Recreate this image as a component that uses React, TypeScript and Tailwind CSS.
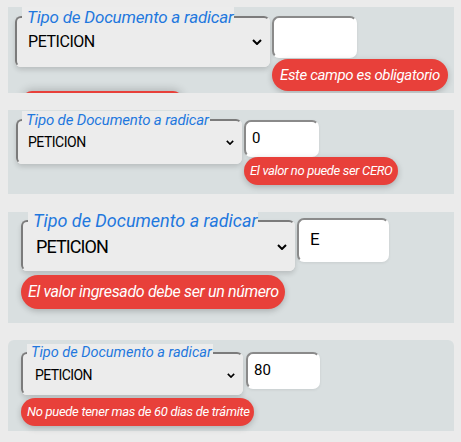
import type { ReactNode } from 'react';

type SelectProps = {
  box: string;
  legend: string;
  body: string;
  value: string;
  chevron: string;
};

// select-like box: fieldset whose legend breaks the top border
const DocSelect = ({ box, legend, body, value, chevron }: SelectProps) => (
  <fieldset
    className={`shrink-0 rounded-md border-2 border-t-[#7b7b7b] border-l-[#7b7b7b] border-r-[#ececec] border-b-[#ececec] bg-[#ececec] shadow-[0_3px_5px_rgba(0,0,0,0.14)] ${box}`}
  >
    <legend className={`bg-[#ececec] italic text-[#1f78de] ${legend}`}>Tipo de Documento a radicar</legend>
    <div className={`flex items-center justify-between text-black ${body}`}>
      <span className={value}>PETICION</span>
      <svg className={chevron} viewBox="0 0 10 6" fill="none" stroke="currentColor" strokeWidth="2">
        <path d="M1 1l4 4 4-4" />
      </svg>
    </div>
  </fieldset>
);

const ValueBox = ({ className, children }: { className: string; children?: ReactNode }) => (
  <div
    className={`flex shrink-0 items-center rounded-[7px] border-2 border-t-[#8a8a8a] border-l-[#8a8a8a] border-r-white border-b-white bg-white text-black shadow-[0_1px_3px_rgba(0,0,0,0.08)] ${className}`}
  >
    {children}
  </div>
);

const Bubble = ({ className, children }: { className: string; children: ReactNode }) => (
  <div
    className={`inline-flex items-center whitespace-nowrap rounded-full bg-[#e8403a] italic text-white shadow-[0_2px_6px_rgba(0,0,0,0.22)] ${className}`}
  >
    {children}
  </div>
);

export default function App() {
  return (
    <div className="min-h-screen bg-[#ebebeb] pl-[8px] pr-[7px] pt-[7px] font-['Roboto',sans-serif]">
      {/* required */}
      <section className="flex h-[86px] items-start gap-[2px] overflow-hidden bg-[#d9dfe0] pl-[7px]">
        <div className="flex flex-col">
          <DocSelect
            box="w-[255px]"
            legend="ml-[5px] pl-[5px] pr-[1px] text-[17px] leading-[20px] tracking-[-0.2px]"
            body="h-[38px] pb-[8px] pl-[11px] pr-[6px]"
            value="text-[16px] tracking-[-0.45px]"
            chevron="h-[6px] w-[10px]"
          />
          <div className="ml-[7px] mt-[24px] h-[20px] w-[161px] rounded-full bg-[#e8403a] shadow-[0_-2px_8px_rgba(0,0,0,0.18)]" />
        </div>
        <div className="mt-[9px] flex flex-col items-start">
          <ValueBox className="h-[42px] w-[85px]" />
          <Bubble className="mt-[1px] h-[32px] px-[8px] text-[15px] tracking-[-0.35px]">Este campo es obligatorio</Bubble>
        </div>
      </section>

      {/* zero */}
      <section className="mt-[17px] flex h-[84px] items-start gap-[2px] bg-[#d9dfe0] pl-[8px] pt-[1px]">
        <DocSelect
          box="w-[226px]"
          legend="ml-[4px] pl-[4px] pr-[1px] text-[15px] leading-[18px] tracking-[-0.15px]"
          body="h-[33px] pb-[6px] pl-[10px] pr-[6px]"
          value="text-[14px] tracking-[-0.5px]"
          chevron="h-[5px] w-[8px]"
        />
        <div className="mt-[9px] flex flex-col items-start">
          <ValueBox className="h-[37px] w-[75px] pl-[6px] text-[15px]">0</ValueBox>
          <Bubble className="h-[28px] px-[6px] text-[13px] tracking-[-0.35px]">El valor no puede ser CERO</Bubble>
        </div>
      </section>

      {/* not a number */}
      <section className="mt-[18px] h-[111px] overflow-hidden bg-[#d9dfe0] pl-[13px]">
        <div className="-mt-[2px] flex items-start gap-[2px]">
          <DocSelect
            box="w-[274px]"
            legend="ml-[5px] pl-[5px] pr-[1px] text-[18px] leading-[21px] tracking-[0px]"
            body="h-[38px] pb-[7px] pl-[13px] pr-[6px]"
            value="text-[18px] tracking-[-0.9px]"
            chevron="h-[6px] w-[10px]"
          />
          <ValueBox className="mt-[8px] h-[44px] w-[92px] pl-[11px] text-[17px]">E</ValueBox>
        </div>
        <Bubble className="mt-[4px] h-[34px] pl-[7px] pr-[6px] text-[16px] tracking-[-0.35px]">
          El valor ingresado debe ser un número
        </Bubble>
      </section>

      {/* more than 60 days */}
      <section className="mt-[17px] h-[91px] rounded-t-md bg-[#d9dfe0] pl-[13px] pt-[4px]">
        <div className="flex items-start gap-[3px]">
          <DocSelect
            box="w-[222px]"
            legend="ml-[4px] pl-[4px] pr-[1px] text-[14.5px] leading-[18px] tracking-[0px]"
            body="h-[31px] pb-[5px] pl-[12px] pr-[6px]"
            value="text-[14px] tracking-[-0.6px]"
            chevron="h-[5px] w-[8px]"
          />
          <ValueBox className="mt-[8px] h-[37px] w-[74px] pl-[6px] text-[15px]">80</ValueBox>
        </div>
        <Bubble className="mt-[3px] h-[28px] pl-[6px] pr-[4px] text-[13px] tracking-[-0.3px]">
          No puede tener mas de 60 dias de trámite
        </Bubble>
      </section>
    </div>
  );
}
